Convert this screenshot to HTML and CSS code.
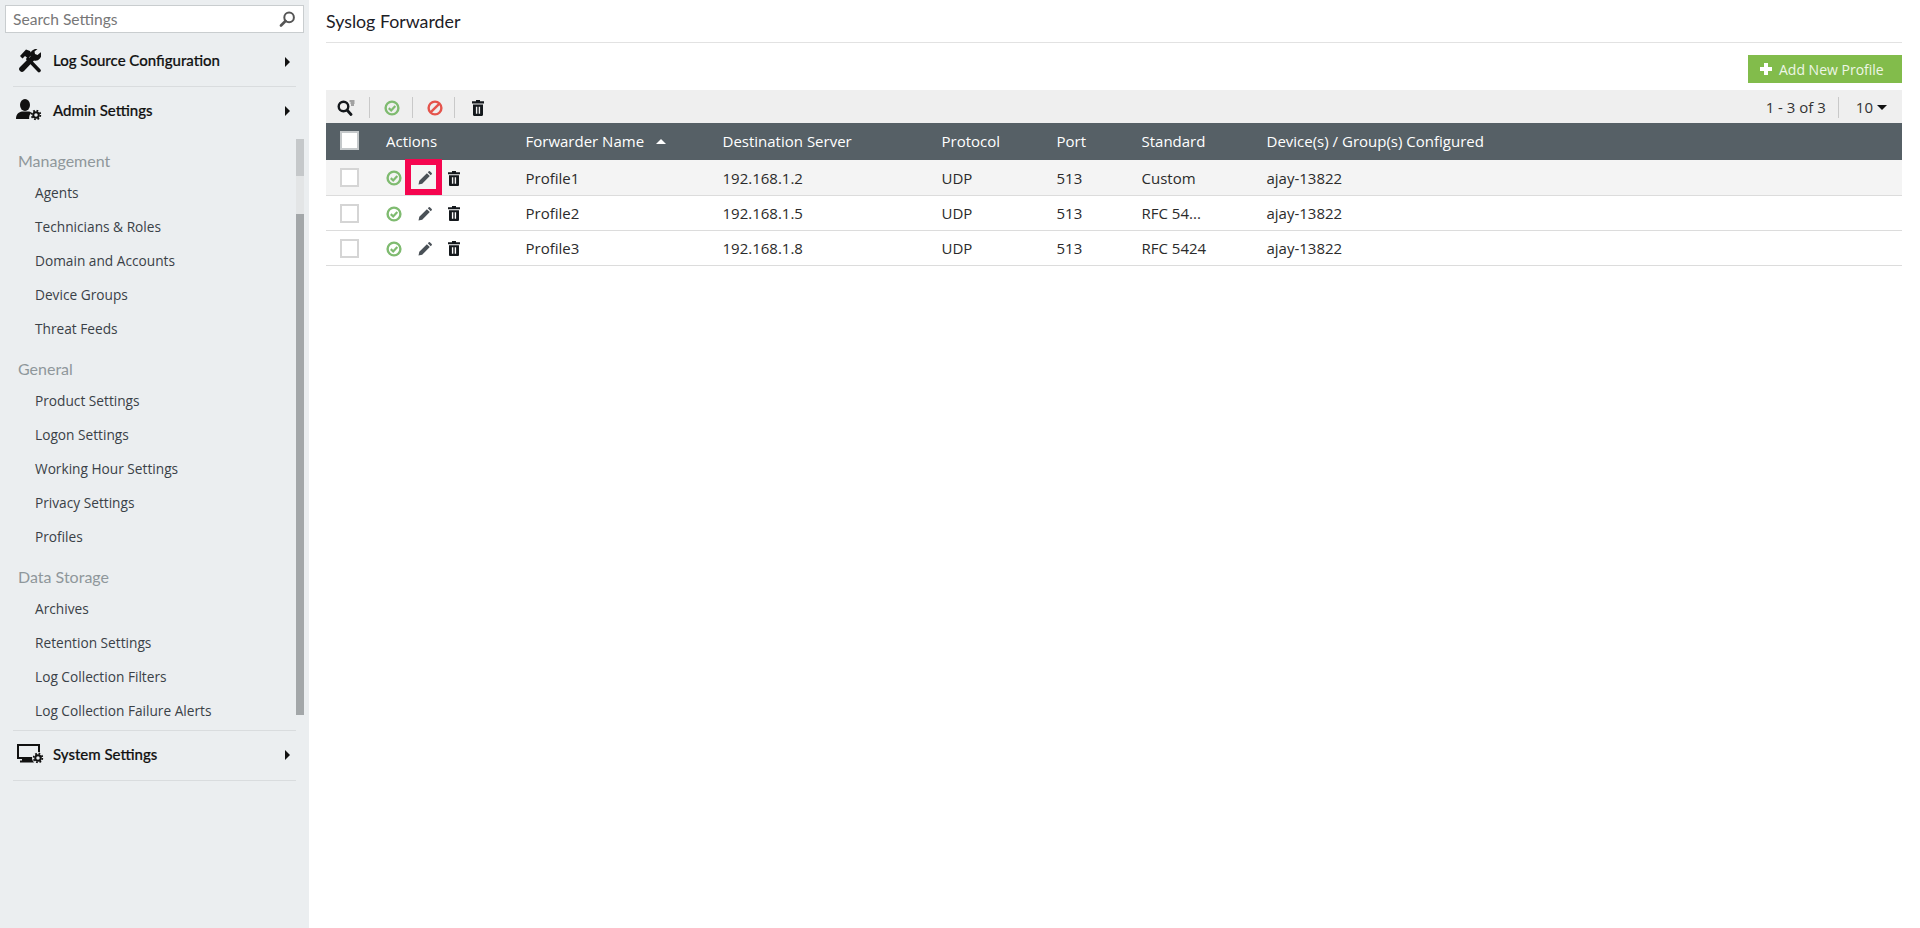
FILE: index.html
```html
<!DOCTYPE html>
<html lang="en">
<head>
<meta charset="utf-8">
<title>Syslog Forwarder</title>
<link rel="stylesheet" href="styles.css">
</head>
<body>
<svg class="defs" width="0" height="0">
  <symbol id="i-check" viewBox="0 0 16 16"><circle cx="8" cy="8" r="6.400" fill="none" stroke="#7fbb70" stroke-width="2.400"/><path d="M4.800 8.100l2.400 2.400 4.100-4.600" fill="none" stroke="#7fbb70" stroke-width="2.200"/></symbol>
  <symbol id="i-ban" viewBox="0 0 16 16"><circle cx="8" cy="8" r="6.400" fill="none" stroke="#e5544c" stroke-width="2.400"/><path d="M3.600 12.400l8.800-8.800" fill="none" stroke="#e5544c" stroke-width="2.400"/></symbol>
  <symbol id="i-pencil" viewBox="0 0 14 14"><path d="M0.5 13.5l0.8-3.7 7.600-7.600 2.900 2.900-7.600 7.600zM9.800 1.300l1-1a.8.8 0 0 1 1.100 0l1.800 1.800a.8.8 0 0 1 0 1.100l-1 1z" fill="#4a5157"/></symbol>
  <symbol id="i-trash" viewBox="0 0 12 14" preserveAspectRatio="none"><path d="M4 0h4v1.200h4v1.900H0V1.200h4zM1 4h10v9a1 1 0 0 1-1 1H2a1 1 0 0 1-1-1zM3.900 5.800v6.200h1.400V5.800zM6.700 5.800v6.200h1.400V5.800z" fill="#14181c" fill-rule="evenodd"/></symbol>
  <symbol id="i-gear" viewBox="0 0 12 12"><circle cx="6" cy="6" r="3" fill="none" stroke="#111" stroke-width="2.200"/><circle cx="6" cy="6" r="4.800" fill="none" stroke="#111" stroke-width="2" stroke-dasharray="1.900 1.870"/></symbol>
</svg>
<div class="app">
  <aside class="sidebar">
    <div class="search">
      <span class="search-text">Search Settings</span>
      <svg class="search-icon" viewBox="0 0 16 16"><circle cx="9.600" cy="6.400" r="4.800" fill="none" stroke="#555" stroke-width="2"/><path d="M6 10L1.500 14.500" stroke="#555" stroke-width="2.600" stroke-linecap="round"/></svg>
    </div>
    <div class="head head-log">
      <svg class="head-icon" viewBox="0 0 22 24">
        <path d="M9 10l11 11.500" stroke="#111" stroke-width="3.600" stroke-linecap="round"/>
        <path d="M1 7L7 .5l4 1.500 2 3.500-4 4-3-2.500-2.500 2.500z" fill="#111"/>
        <path d="M21.800 3.200L18.500 6 16 5l-.5-2.500L18.500 0a6 6 0 0 0-7 7.500L1 18a2.700 2.700 0 0 0 4 4l10-10.500a6 6 0 0 0 6.800-8.300z" fill="#111"/>
      </svg>
      <span class="head-label">Log Source Configuration</span>
      <span class="arrow"></span>
    </div>
    <div class="head head-admin">
      <svg class="head-icon" viewBox="0 0 26 22">
        <ellipse cx="9" cy="6" rx="5" ry="6" fill="#111"/>
        <path d="M0 20c0-5 3-7 6-7.500h6c1.500 0 2.500.5 3.500 1.300A7 7 0 0 0 13.200 20z" fill="#111"/>
        <use href="#i-gear" x="14.500" y="10.500" width="11" height="11"/>
      </svg>
      <span class="head-label">Admin Settings</span>
      <span class="arrow"></span>
    </div>
    <div class="scroller">
      <div class="scrollbar"><span class="thumb-a"></span><span class="thumb-b"></span><span class="thumb-c"></span></div>
      <h3 class="group">Management</h3>
      <a class="item">Agents</a>
      <a class="item">Technicians &amp; Roles</a>
      <a class="item">Domain and Accounts</a>
      <a class="item">Device Groups</a>
      <a class="item">Threat Feeds</a>
      <h3 class="group">General</h3>
      <a class="item">Product Settings</a>
      <a class="item">Logon Settings</a>
      <a class="item">Working Hour Settings</a>
      <a class="item">Privacy Settings</a>
      <a class="item">Profiles</a>
      <h3 class="group">Data Storage</h3>
      <a class="item">Archives</a>
      <a class="item">Retention Settings</a>
      <a class="item">Log Collection Filters</a>
      <a class="item">Log Collection Failure Alerts</a>
    </div>
    <div class="head head-system">
      <svg class="head-icon" viewBox="0 0 27 20">
        <path d="M1 1h21v13H1z" fill="none" stroke="#111" stroke-width="2"/>
        <path d="M5 15h12v1.500h3v2H3v-2h2z" fill="#111"/>
        <circle cx="21" cy="14" r="6" fill="#ebeef0"/>
        <use href="#i-gear" x="15.500" y="8.500" width="11" height="11"/>
      </svg>
      <span class="head-label">System Settings</span>
      <span class="arrow"></span>
    </div>
  </aside>
  <main class="main">
    <h1 class="title">Syslog Forwarder</h1>
    <div class="actions-bar">
      <button class="add-btn"><span class="plus"></span>Add New Profile</button>
    </div>
    <div class="toolbar">
      <div class="tools">
        <svg class="tool tool-search" viewBox="0 0 18 16"><circle cx="6.500" cy="6.500" r="4.800" fill="none" stroke="#14181c" stroke-width="2.400"/><path d="M10 10l4 4.500" stroke="#14181c" stroke-width="2.800" stroke-linecap="round"/><path d="M12.500 1h5M13.500 3h4M14 5h3" stroke="#555" stroke-width="1"/></svg>
        <span class="sep sep-first"></span>
        <svg class="tool"><use href="#i-check"/></svg>
        <span class="sep"></span>
        <svg class="tool"><use href="#i-ban"/></svg>
        <span class="sep sep-last"></span>
        <svg class="tool tool-trash"><use href="#i-trash"/></svg>
      </div>
      <div class="pager">
        <span>1 - 3 of 3</span>
        <span class="sep sep-pager"></span>
        <span>10</span>
        <span class="caret"></span>
      </div>
    </div>
    <table class="grid">
      <colgroup>
        <col class="c1"><col class="c2"><col class="c3"><col class="c4"><col class="c5"><col class="c6"><col class="c7"><col>
      </colgroup>
      <thead>
        <tr>
          <th><span class="box box-head"></span></th>
          <th>Actions</th>
          <th>Forwarder Name<span class="sort"></span></th>
          <th>Destination Server</th>
          <th>Protocol</th>
          <th>Port</th>
          <th>Standard</th>
          <th>Device(s) / Group(s) Configured</th>
        </tr>
      </thead>
      <tbody>
        <tr class="hover">
          <td><span class="box"></span></td>
          <td><div class="row-acts"><svg class="a-check"><use href="#i-check"/></svg><span class="a-pencil marked"><svg><use href="#i-pencil"/></svg></span><svg class="a-trash"><use href="#i-trash"/></svg></div></td>
          <td>Profile1</td><td>192.168.1.2</td><td>UDP</td><td>513</td><td>Custom</td><td>ajay-13822</td>
        </tr>
        <tr>
          <td><span class="box"></span></td>
          <td><div class="row-acts"><svg class="a-check"><use href="#i-check"/></svg><span class="a-pencil"><svg><use href="#i-pencil"/></svg></span><svg class="a-trash"><use href="#i-trash"/></svg></div></td>
          <td>Profile2</td><td>192.168.1.5</td><td>UDP</td><td>513</td><td>RFC 54...</td><td>ajay-13822</td>
        </tr>
        <tr>
          <td><span class="box"></span></td>
          <td><div class="row-acts"><svg class="a-check"><use href="#i-check"/></svg><span class="a-pencil"><svg><use href="#i-pencil"/></svg></span><svg class="a-trash"><use href="#i-trash"/></svg></div></td>
          <td>Profile3</td><td>192.168.1.8</td><td>UDP</td><td>513</td><td>RFC 5424</td><td>ajay-13822</td>
        </tr>
      </tbody>
    </table>
  </main>
</div>
</body>
</html>
```

FILE: styles.css
```css
*, *::before, *::after { box-sizing: border-box; }
html, body { margin: 0; height: 100%; overflow: hidden; background: #fff; }
body { font-family: "Open Sans", sans-serif; font-size: 15px; color: #2b2b2b; }
.defs { position: absolute; }
.app { display: flex; height: 928px; }

/* sidebar */
.sidebar { width: 309px; flex: none; background: #ebeef0; display: flex; flex-direction: column; padding: 5px 0 0; }
.search { margin: 0 5px 0 5px; height: 28px; width: 299px; background: #fff; border: 1px solid #c9cdcf; display: flex; align-items: center; justify-content: space-between; padding: 0 7px; }
.search-text { font-family: Lato, sans-serif; font-size: 15.6px; color: #777; }
.search-icon { width: 17px; height: 16px; }
.head { display: flex; align-items: center; margin: 0 13px; position: relative; font-family: Lato, sans-serif; font-size: 15px; font-weight: 500; color: #111; }
.head-label { position: absolute; left: 40px; -webkit-text-stroke: 0.2px #111; }
.head-icon { position: absolute; }
.head-log { height: 54px; border-bottom: 1px solid #d9dcde; }
.head-log .head-icon { width: 22px; height: 24px; top: 16px; left: 6px; }
.head-admin { height: 46px; }
.head-admin .head-icon { width: 26px; height: 22px; top: 12px; left: 3px; }
.head-system { height: 51px; border-top: 1px solid #d9dcde; border-bottom: 1px solid #d9dcde; padding-bottom: 3px; }
.head-system .head-icon { width: 27px; height: 20px; top: 13px; left: 4px; }
.arrow { position: absolute; right: 6px; top: 50%; margin-top: -5px; border-left: 5px solid #111; border-top: 5px solid transparent; border-bottom: 5px solid transparent; }
.head-log .arrow { margin-top: -3px; }
.head-admin .arrow { margin-top: -4px; }
.head-system .arrow { margin-top: -6px; }
.scroller { height: 597px; position: relative; padding-top: 13px; }
.scrollbar { position: absolute; left: 296px; top: 6px; width: 8px; height: 576px; display: flex; flex-direction: column; }
.thumb-a { height: 37px; background: #c5c8ca; }
.thumb-b { height: 38px; background: #e3e5e6; }
.thumb-c { flex: 1; background: #a3a7a9; }
.group { margin: 0; padding-left: 18px; height: 30px; line-height: 30px; font-family: Lato, sans-serif; font-size: 16px; font-weight: 400; color: #8f979b; }
.group ~ .group { margin-top: 8px; }
.item { display: block; height: 34px; line-height: 34px; padding-left: 35px; font-size: 13.7px; color: #3a4147; }

/* main */
.main { flex: none; width: 1611px; padding: 0 18px 0 17px; }
.title { margin: 0; height: 43px; line-height: 42px; font-family: Lato, sans-serif; font-size: 17.8px; font-weight: 400; color: #1c2026; border-bottom: 1px solid #e2e2e2; }
.actions-bar { display: flex; justify-content: flex-end; padding-top: 12px; height: 47px; }
.add-btn { display: flex; align-items: center; height: 28px; width: 154px; border: 0; padding: 0 0 0 12px; background: #82bc4b; color: #eef6e6; font-family: "Open Sans", sans-serif; font-size: 14px; }
.plus { width: 12px; height: 12px; margin-right: 7px; background: linear-gradient(#fff, #fff) center / 12px 4px no-repeat, linear-gradient(#fff, #fff) center / 4px 12px no-repeat; }
.toolbar { height: 33px; background: #efefef; display: flex; align-items: center; justify-content: space-between; }
.tools { display: flex; align-items: center; padding: 2px 0 0 11px; }
.tool { width: 16px; height: 16px; }
.tool-search { width: 18px; }
.tool-trash { width: 12px; height: 16px; }
.sep { width: 1px; height: 21px; background: #c9c9c9; margin: 0 14px 0 12px; }
.sep-first { margin-left: 14px; }
.sep-last { margin: 0 17px 0 11px; }
.pager { display: flex; align-items: center; padding: 1px 15px 0 0; color: #333; }
.sep-pager { margin: 0 17px 0 12px; }
.caret { margin-left: 4px; border-top: 5px solid #111; border-left: 5px solid transparent; border-right: 5px solid transparent; }

/* table */
.grid { width: 1576px; table-layout: fixed; border-collapse: collapse; }
.c1 { width: 60px; } .c2 { width: 139.5px; } .c3 { width: 197px; } .c4 { width: 219px; } .c5 { width: 115px; } .c6 { width: 85px; } .c7 { width: 125px; }
.grid th { height: 37px; background: #566066; color: #fff; font-weight: 400; text-align: left; padding: 0 0 2px; white-space: nowrap; }
.grid td { height: 35px; border-bottom: 1px solid #dcdcdc; padding: 1px 0 0; color: #2b2b2b; }
.hover td { background: #f4f4f4; }
.grid th:first-child, .grid td:first-child { padding-left: 14px; }
.box { display: block; width: 19px; height: 19px; background: #fff; border: 2px solid #d5d5d5; }
.box-head { border-color: #c4c8ca; }
.sort { display: inline-block; margin-left: 12px; vertical-align: 3px; border-bottom: 5px solid #fff; border-left: 5px solid transparent; border-right: 5px solid transparent; }
.row-acts { display: flex; align-items: center; padding-top: 1px; }
.a-check { width: 16px; height: 16px; flex: none; }
.a-pencil { position: relative; display: flex; width: 14px; height: 14px; margin: 0 16px; flex: none; }
.a-pencil svg { width: 14px; height: 14px; }
.a-trash { width: 12px; height: 15px; flex: none; }
.marked::after { content: ""; position: absolute; left: -13px; top: -12px; width: 37px; height: 36px; border: 6px solid #f5054f; }
```
